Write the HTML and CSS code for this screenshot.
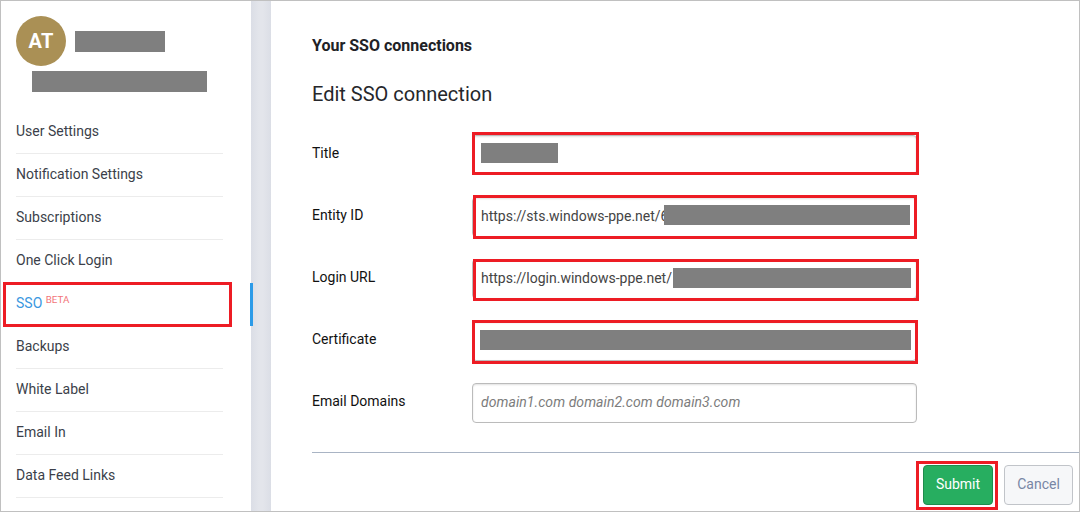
FILE: index.html
```html
<!DOCTYPE html>
<html lang="en">
<head>
<meta charset="utf-8">
<title>SSO connections</title>
<link rel="stylesheet" href="styles.css">
</head>
<body>
<div class="app">
  <aside class="sidebar">
    <div class="profile">
      <div class="profile-top"><div class="avatar">AT</div><span class="redact name"></span></div>
      <span class="redact mail"></span>
    </div>
    <nav class="nav">
      <a class="nav-item">User Settings</a>
      <a class="nav-item">Notification Settings</a>
      <a class="nav-item">Subscriptions</a>
      <a class="nav-item">One Click Login</a>
      <a class="nav-item active">SSO <span class="beta">BETA</span><span class="mark mark-sso"></span></a>
      <a class="nav-item">Backups</a>
      <a class="nav-item">White Label</a>
      <a class="nav-item">Email In</a>
      <a class="nav-item">Data Feed Links</a>
    </nav>
  </aside>
  <div class="gutter"></div>
  <main class="main">
    <h1 class="heading">Your SSO connections</h1>
    <h2 class="subheading">Edit SSO connection</h2>
    <form class="form">
      <div class="row"><span class="label">Title</span><div class="input"><span class="redact r-title"></span><span class="mark m-title"></span></div></div>
      <div class="row"><span class="label">Entity ID</span><div class="input">https://sts.windows-ppe.net/6<span class="redact r-entity"></span><span class="mark m-entity"></span></div></div>
      <div class="row"><span class="label">Login URL</span><div class="input">https://login.windows-ppe.net/<span class="redact r-login"></span><span class="mark m-login"></span></div></div>
      <div class="row"><span class="label">Certificate</span><div class="input"><span class="redact r-cert"></span><span class="mark m-cert"></span></div></div>
      <div class="row"><span class="label">Email Domains</span><div class="input placeholder">domain1.com domain2.com domain3.com</div></div>
    </form>
    <div class="actions">
      <div class="button submit">Submit<span class="mark m-submit"></span></div>
      <div class="button cancel">Cancel</div>
    </div>
  </main>
</div>
</body>
</html>
```
FILE: styles.css
```css
* { box-sizing: border-box; }
body { margin: 0; font: 14px/20px Roboto, sans-serif; color: #3b3f4a; background: #fff; }
.app { display: flex; width: 1080px; height: 512px; border: 1px solid #c0c0c0; overflow: hidden; }

.sidebar { width: 250px; flex: none; padding: 15px 0 0 15px; }
.profile { height: 95px; }
.profile-top { display: flex; align-items: center; gap: 9px; height: 50px; }
.avatar { width: 50px; height: 50px; border-radius: 50%; background: #aa9055; color: #fff; font-size: 20px; font-weight: 700; letter-spacing: .3px; line-height: 51px; text-align: center; }
.redact { display: block; background: #7f7f7f; }
.name { width: 90px; height: 21px; }
.mail { width: 175px; height: 21px; margin: 5px 0 0 16px; }
.nav-item { display: block; position: relative; width: 207px; height: 43px; padding-top: 10px; border-bottom: 1px solid #ececec; }
.active { color: #3a97e0; }
.active::after { content: ""; position: absolute; left: 234px; top: 0; width: 3px; height: 43px; background: #2c9be8; z-index: 1; }
.beta { font-size: 9.8px; line-height: 0; color: #f27579; position: relative; top: -5px; }
.gutter { width: 20px; flex: none; background: linear-gradient(90deg, #dbdee6, #e3e5eb 40%, #e3e5eb 60%, #dbdee6); }

.main { flex: 1; padding: 35px 0 0 41px; }
.heading { margin: 0; font-size: 16px; font-weight: 700; line-height: 20px; color: #212226; }
.subheading { margin: 25px 0 0; font-size: 20px; font-weight: 400; line-height: 26px; color: #26272b; }
.form { display: grid; gap: 22px; margin-top: 28px; padding-bottom: 29px; border-bottom: 1px solid #a9b4c4; }
.row { display: flex; height: 40px; }
.label { width: 160px; padding-top: 8px; color: #111; }
.input { position: relative; width: 445px; height: 40px; padding: 8px; border: 1px solid #bbb; border-radius: 4px; box-shadow: inset 0 1px 2px rgba(0, 0, 0, .12); color: #444; white-space: nowrap; }
.placeholder { font-style: italic; letter-spacing: .06px; color: #7c7c7c; }

.actions { display: flex; justify-content: flex-end; gap: 11px; padding: 12px 6px 0 0; }
.button { position: relative; height: 40px; padding-top: 8px; border: 1px solid; border-radius: 4px; text-align: center; }
.submit { width: 70px; background: #27ae60; border-color: #1f8b4d; color: #fff; }
.cancel { width: 69px; background: #f6f7f9; border-color: #c1c4c9; color: #7886a5; }

/* Annotation overlays */
.mark { position: absolute; border: 3px solid #ed1c24; }
.mark-sso { left: -13px; top: -1px; width: 229px; height: 45px; }
.input .redact { position: absolute; height: 20px; }
.r-title { left: 8px; top: 7px; width: 77px; }
.r-entity { left: 191px; top: 7px; width: 246px; }
.r-login { left: 200px; top: 8px; width: 238px; }
.r-cert { left: 7px; top: 8px; width: 431px; }
.m-title { left: -1px; top: -4px; width: 447px; height: 43px; }
.m-entity { left: 0; top: -3px; width: 444px; height: 44px; }
.m-login { left: 0; top: -1px; width: 446px; height: 42px; }
.m-cert { left: -1px; top: -2px; width: 446px; height: 44px; }
.m-submit { left: -8px; top: -5px; width: 82px; height: 49px; }
```
